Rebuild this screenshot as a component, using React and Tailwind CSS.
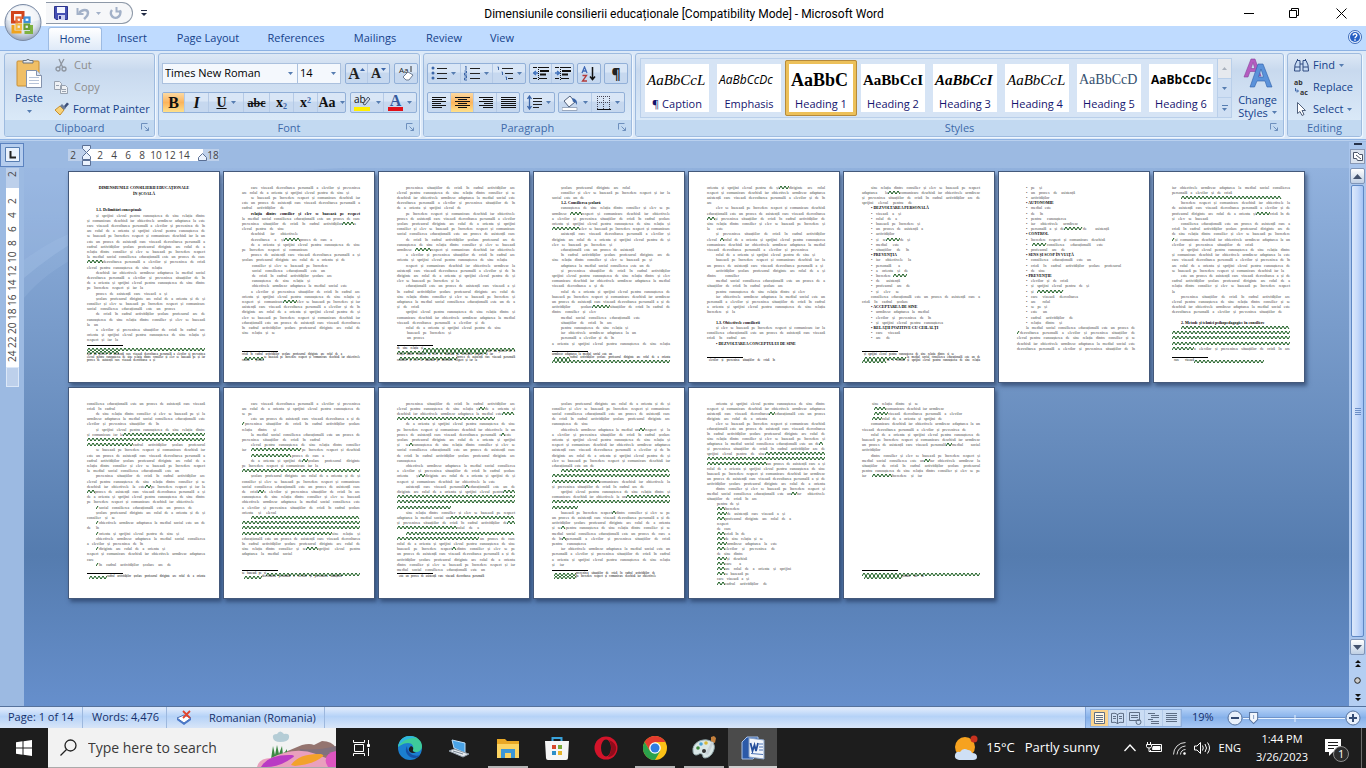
import { useState } from 'react'

// Line shorthand: F full line, P first line of a paragraph, G flagged line, _ blank,
// otherwise start-end in px, "b" for bold, "~a-b" for a flagged run.
const PAGES = [
  {
    body: '28-98b 52-68b _ _ 9-44b P F F F F F F F F F~0-16 0-75 P F F 0-56 9-80 P F 0-88 P F 0-11 P F 0-31',
    notes: 'G 0-32~0-32 F F 0-68',
    headings: ['1.1. Delimitări conceptuale'],
  },
  {
    body: 'P 0-107 P F 0-42 Pb F F~100-112 0-42 9-56 9-90~42-58 P 0-66 P 0-103 10-86 10-83 10-90 10-68 10-105 P F F~41-55 F F F F F 0-33',
    notes: '0-100 F~2-22 0-22',
  },
  {
    body: 'P F F F 0-64 P F F F F 9-118 F F~18-34 9-118 0-110 P F F 0-62 P F F F 0-22 P F 0-88 9-104 10-54 10-27',
    notes: 'F~26-118 F~0-90 0-96 F~2-60 0-80',
  },
  {
    body: '9-78 9-118 0-32 9-40b P F~18-30 F F F~0-28 P F 0-60 9-82 P 0-100 9-98 P F F 0-52 P F F F~40-58 0-44 9-88 9-60 9-76 9-84 9-62 F',
    notes: '0-60 F~2-18 F~0-118',
    headings: ['1.2. Consilierea școlară'],
  },
  {
    body: 'F~72-82 F F 0-8 P F F~0-8 F 0-16 P F~13-17 F 0-101 9-108 P 0-116 P 0-32 P 0-76 9-98 P F F 0-28 _ 9-42b P F 0-39 9-84b',
    notes: '2-68',
    headings: ['1.3. Obiectivele consilierii', '• DEZVOLTAREA CONCEPTULUI DE SINE'],
  },
  {
    body: 'P F~26-38 F 0-50 9-57b 9-39 9-35 9-58 9-61 9-38 9-48~24-38 9-37 9-47 9-31b 9-49 9-38 9-46 9-45~31-45 9-38 9-48 9-37 P 0-46 9-47b 9-67 9-69 9-81 9-62b 9-38 9-28',
    notes: '2-92 F~2-45 F~0-25',
    headings: ['• DEZVOLTAREA PERSONALĂ', '• PREVENȚIA', '• ACCEPTAREA DE SINE', '• RELAȚII POZITIVE CU CEILALȚI'],
    bullets: true,
  },
  {
    body: '9-25 9-58 9-38 9-32b 9-34 9-26 9-49 9-61 9-92~47-66 9-31b 9-88 9-86~15-30 9-48 9-48b 9-74 9-104 9-28 9-41b 9-51 9-72 9-47~20-47 9-61 9-33 9-30 9-30 9-56 9-45 P F~0-3 F F F',
    notes: '_',
    headings: ['• AUTONOMIE', '• CONTROL', '• SENS ȘI SCOP ÎN VIAȚĂ', '• PREVENȚIE'],
    bullets: true,
  },
  {
    body: 'F 0-60 9-110~9-110 P F F~84-98 0-36 P F F F~0-3 0-81 P F F F 0-112 P F F 0-5 P F F 0-110 _ 9-88b 9-118~9-118 G G G F~0-22',
    notes: '2-92~22-92',
    headings: ['2. Metode și tehnici psihopedagogice în consiliere'],
  },
  {
    body: 'F 0-28 P F 0-72 P F~36-118 G F~0-46 P F F F 0-92 P F F~58-64 F~0-8 F 0-107 9-105~9-12 P 0-28 P~9-12 0-12 9-92~9-12 P 0-56 9-78~9-12 F 0-12 9-84~9-12',
    notes: '2-118~2-20',
  },
  {
    body: 'P 0-118 0-10 P F~0-3 0-34 9-118 0-78 9-118 F~9-60 9-82~9-50 P~60-66 0-76 G 9-118 F F F~16-22 F F F 0-34 9-118~9-118 G G F~0-90 F F F~64-76 0-50',
    notes: 'F~24-118 0-100~2-20',
  },
  {
    body: 'P F~82-88 F~105-118 0-98~0-98 P F F~104-108 F F~12-16 F F 0-22 P F F~22-28 0-98 P~68-72 F~106-118 G G 0-54~0-54 P F~53-118 F~110-118 0-82~0-60 9-118~9-118 F~0-83 F F~55-60 F F F 0-88',
    notes: '2-87',
  },
  {
    body: 'P F F F 0-36 P~87-93 F F F F F F 0-42 9-118~9-118 G F~0-48 0-92 P F~74-118 G 0-26~0-26 P~60-64 F F F~9-14 F F~10-14 0-34 P F F 0-12',
    notes: '2-103~2-24 2-104~2-24',
  },
  {
    body: 'P F F~62-68 0-60 P F F F F~112-116 F F~58-118 F~0-118 F~0-60 F F F F 9-118 F~84-90 0-50 10-32 10-38~10-18 10-78~10-20 10-84~10-18 10-26 10-24 10-38~10-18 10-56~10-18 10-70~10-20 10-68~10-18 10-36 10-40~10-20 10-34~10-18 10-84~10-18 10-42~10-18 10-42 10-60~10-18',
    notes: '_',
  },
  {
    body: '10-56 10-82~12-24 10-100~12-26 10-80~10-20 P 0-104 P F F~84-90 0-28 P F~62-68 F F 0-60~10-30',
    notes: 'G 2-62~2-40',
  },
]

const WORDS = (
  'consilierea educațională este un proces de asistență care vizează dezvoltarea personală a elevilor și prevenirea situațiilor de criză ' +
  'în cadrul activităților școlare profesorul diriginte are rolul de a orienta și sprijini elevul pentru cunoașterea de sine ' +
  'relația dintre consilier și elev se bazează pe încredere respect și comunicare deschisă iar obiectivele urmăresc adaptarea la mediul social'
).split(' ')

const SHORTHANDS = { F: '0-118', P: '9-118', G: '0-118~0-118' }

function parseLine(token) {
  if (token === '_') return null
  const [head, mark] = token.split('~')
  const bold = head.endsWith('b')
  const key = bold ? head.slice(0, -1) : head
  const full = SHORTHANDS[key] || key
  const [range, own] = full.split('~')
  const [start, end] = range.split('-').map(Number)
  const flagged = (mark || own || '').split('-').map(Number)
  return { start, end, bold, flagged: flagged.length === 2 ? flagged : null }
}

// Picks as many words as fit on a run of the given width.
function fitWords(width, seed, charWidth) {
  const room = Math.floor(width / charWidth)
  const at = (seed * 17) % WORDS.length
  let text = ''
  for (const word of [...WORDS.slice(at), ...WORDS]) {
    const left = room - text.length - (text ? 1 : 0)
    if (left < 2) break
    if (word.length <= left) text += (text ? ' ' : '') + word
  }
  return text
}

function Squiggle({ width }) {
  let d = 'M0 4'
  for (let x = 2, up = true; x <= width; x += 2, up = !up) d += `L${x} ${up ? 1 : 4}`
  return (
    <svg width={width} height="5" className="shrink-0" aria-hidden="true">
      <path d={d} fill="none" stroke="#15591b" />
    </svg>
  )
}

function Run({ width, seed, bold, note, bullet }) {
  if (width <= 0) return null
  const room = bullet ? width - 5 : width
  const text = fitWords(room, seed, (note ? 1.35 : 1.8) + (bold ? 0.2 : 0))
  return (
    <>
      {bullet && <span className="w-[5px] shrink-0">•</span>}
      <span className={`shrink-0 whitespace-nowrap [text-align-last:justify] ${bold ? 'font-bold text-black' : ''}`} style={{ width: room }}>
        {text}
      </span>
    </>
  )
}

function Line({ token, seed, note, heading, bullets, className }) {
  const line = parseLine(token)
  if (!line) return <div className={className} />
  const { start, end, bold, flagged } = line
  const bullet = bullets && start === 9 && end < 118
  return (
    <div className={`flex ${className}`} style={{ paddingLeft: start }}>
      {heading ? (
        <h2 className="font-bold whitespace-nowrap text-black">{heading}</h2>
      ) : flagged ? (
        <>
          <Run width={flagged[0] - start} seed={seed} bold={bold} note={note} bullet={bullet} />
          <Squiggle width={flagged[1] - flagged[0]} />
          <Run width={end - flagged[1]} seed={seed + 3} bold={bold} note={note} />
        </>
      ) : (
        <Run width={end - start} seed={seed} bold={bold} note={note} bullet={bullet} />
      )}
    </div>
  )
}

function Sheet({ page, index }) {
  const body = page.body.split(' ')
  const headings = [...(page.headings || [])]
  return (
    <article className="flex h-[210px] flex-col bg-white pt-[13px] pr-3 pb-5 pl-[18px] font-['Liberation_Serif',serif] text-[4px] leading-[5px] text-[#484848] outline outline-[#44597b] shadow-[2px_3px_4px_1px_rgba(30,50,85,0.6)]">
      {body.map((token, i) =>
        index === 0 && i < 2 ? (
          <h1 key={i} className="h-1.5 pr-1.5 text-center font-bold text-black">
            {i === 0 ? 'DIMENSIUNILE CONSILIERII EDUCAȚIONALE' : 'ÎN ȘCOALĂ'}
          </h1>
        ) : (
          <Line
            key={i}
            token={token}
            seed={index * 7 + i}
            bullets={page.bullets}
            heading={token.endsWith('b') ? headings.shift() : null}
            className={i % 5 === 4 ? 'h-1.5' : 'h-[5px]'}
          />
        )
      )}
      {page.notes !== '_' && (
        <footer className="mt-auto text-[3px] leading-[3px] text-black">
          <div className="mb-px h-px w-9 bg-black" />
          {page.notes.split(' ').map((token, i) => (
            <Line key={i} note token={token} seed={index + i * 5} className="h-[3px]" />
          ))}
        </footer>
      )}
    </article>
  )
}

function Arrow({ className = 'text-[#567db1]' }) {
  return (
    <svg width="5" height="3" viewBox="0 0 5 3" className={`shrink-0 ${className}`} aria-hidden="true">
      <path d="M0 0h5L2.5 3z" fill="currentColor" />
    </svg>
  )
}

function Launcher({ label }) {
  return (
    <button aria-label={label} className="absolute right-1 bottom-1">
      <svg width="9" height="9" viewBox="0 0 9 9" fill="none" stroke="#6d8fbd">
        <path d="M.5 6.500V.5h6M3.500 3.500l4 4M7.500 4.500v3h-3" />
      </svg>
    </button>
  )
}

function Group({ title, className, launcher = true, children }) {
  return (
    <section className={`relative flex flex-col rounded-[3px] border border-[#9ebbdf] bg-linear-to-b from-[#dde8f5] from-0% via-[#c8d9ee] via-20% to-[#dae9f8] to-80% shadow-[1px_1px_0_#f0f7ff] ${className}`}>
      <div className="flex flex-1">{children}</div>
      <h2 className="h-4 rounded-b-[2px] bg-[#c2d9f1] text-center leading-4 text-[#3e6aaa]">{title}</h2>
      {launcher && <Launcher label={`${title} options`} />}
    </section>
  )
}

function Cluster({ className = '', children }) {
  return (
    <div className={`flex h-[21px] divide-x divide-[#b5cae6] rounded-[2px] border border-[#92b0d8] bg-linear-to-b from-[#d9e6f6] from-40% to-[#c6d8ef] to-50% ${className}`}>
      {children}
    </div>
  )
}

function Tool({ label, active, drop, className = 'flex-1', children }) {
  return (
    <button
      aria-label={label}
      aria-pressed={active}
      className={`flex items-center justify-center gap-1 ${active ? 'bg-linear-to-b from-[#fcd9a0] via-[#fbb45c] to-[#fde08a]' : ''} ${className}`}
    >
      {children}
      {drop && <Arrow />}
    </button>
  )
}

function Bars({ rows }) {
  return (
    <svg width="15" height="12" viewBox="0 0 15 12" shapeRendering="crispEdges">
      {rows.map(([x, w], i) => (
        <rect key={i} x={x} y={i * 2} width={w} height="1" fill="#111" />
      ))}
    </svg>
  )
}

function ListIcon({ kind }) {
  const x = kind === 'multi' ? [5, 8, 11] : [6, 6, 6]
  return (
    <svg width="16" height="15" viewBox="0 0 16 15">
      {[2, 7, 12].map((y, i) => (
        <g key={y}>
          {kind === 'bullet' ? (
            <circle cx="2" cy={y} r="1.500" fill="#3c66a8" />
          ) : kind === 'number' ? (
            <path d={i ? `M.5 ${y - 2}h2v2h-2v2h2.500` : `M1 ${y - 2}h1v4`} fill="none" stroke="#3c66a8" />
          ) : (
            <path d={`M${i * 4 + 0.5} ${y - 1}h1v3`} fill="none" stroke="#3c66a8" />
          )}
          <path d={`M${x[i]} ${y + 0.5}H16`} stroke="#222" />
        </g>
      ))}
    </svg>
  )
}

function IndentIcon({ flip }) {
  return (
    <svg width="16" height="13" viewBox="0 0 16 13" fill="none" stroke="#111">
      <path d="M0 .5h4M6 .5h10M0 11.500h4M6 11.500h8" />
      <path d="M7 4h9M7 7.500h6" strokeWidth="2" />
      <path d="M5.500 0v13" strokeDasharray="1 1" />
      <path d={flip ? 'M0 6h4M2 4l2.500 2L2 8' : 'M5 6H1M3 4L.5 6 3 8'} stroke="#4273bd" strokeWidth="1.500" />
    </svg>
  )
}

function OfficeButton() {
  return (
    <button aria-label="Office Button" className="absolute top-0.5 left-1 z-10">
      <svg width="38" height="40" viewBox="0 0 38 40">
        <defs>
          <radialGradient id="orb" cx=".5" cy=".35" r=".65">
            <stop offset="0" stopColor="#fff" />
            <stop offset=".65" stopColor="#dfe5ee" />
            <stop offset="1" stopColor="#94a3bb" />
          </radialGradient>
        </defs>
        <circle cx="19" cy="20.500" r="18" fill="url(#orb)" stroke="#7b8ba5" />
        <path d="M3 18a16 14 0 0 1 32 0q-16 6-32 0z" fill="#fff" opacity=".5" />
        <g fill="none" strokeWidth="3">
          <path d="M19 17v-6.500H8.500v9.500H14" stroke="#d1441c" />
          <path d="M9 23v7h8.500" stroke="#f0a31c" />
          <path d="M20.500 30.500h7V23" stroke="#7fb241" />
          <g strokeWidth="2.200">
            <rect x="12.500" y="15.500" width="4.500" height="4.500" stroke="#e8703a" />
            <rect x="20.500" y="15.500" width="5" height="4.500" stroke="#3f8fd6" />
            <rect x="12.500" y="22.500" width="4.500" height="4.500" stroke="#f5b93f" />
            <rect x="20.500" y="22.500" width="4.500" height="4.500" stroke="#69a034" />
          </g>
        </g>
      </svg>
    </button>
  )
}

function TitleBar() {
  return (
    <header className="relative flex h-[26px] items-center bg-white">
      <OfficeButton />
      <div className="ml-[46px] flex h-[22px] w-[87px] items-center gap-2 rounded-r-full border border-l-0 border-[#8e99a8] bg-[#f6f7f9] pl-2">
        <button aria-label="Save">
          <svg width="14" height="14" viewBox="0 0 14 14">
            <path d="M.5.5h13v13H2L.5 12z" fill="#4650b4" stroke="#2d348c" />
            <path d="M3 1h8v6H3z" fill="#f3f5ff" />
            <path d="M4 9h7v5H4z" fill="#c9cdf0" />
            <path d="M5 10h2v3H5z" fill="#2d348c" />
          </svg>
        </button>
        <button aria-label="Undo" className="flex items-center gap-1.5">
          <svg width="14" height="13" viewBox="0 0 14 13" fill="none" stroke="#a3b1c8" strokeWidth="2.500">
            <path d="M3 6c3-4 9-4 9 0 0 3-2 4-4 6" />
            <path d="M1.500 1v6h6" strokeWidth="2" />
          </svg>
          <Arrow className="text-[#a3b1c8]" />
        </button>
        <button aria-label="Redo">
          <svg width="13" height="13" viewBox="0 0 13 13" fill="none" stroke="#a3b1c8" strokeWidth="2.500">
            <path d="M3 3a4.700 4.700 0 1 0 7.500.5" />
            <path d="M7.500 0v4.500h5" strokeWidth="2" />
          </svg>
        </button>
      </div>
      <button aria-label="Customize Quick Access Toolbar" className="ml-2">
        <svg width="6" height="6" viewBox="0 0 6 6">
          <path d="M0 .5h6" stroke="#222b44" />
          <path d="M0 3h6L3 6z" fill="#222b44" />
        </svg>
      </button>
      <h1 className="absolute inset-x-0 pt-0.5 pl-0.5 text-center font-['Roboto','Noto_Sans',sans-serif] text-xs text-black">
        Dimensiunile consilierii educaționale [Compatibility Mode] - Microsoft Word
      </h1>
      <div className="z-10 ml-auto flex">
        <button aria-label="Minimize" className="flex w-[45px] justify-center">
          <svg width="11" height="11" stroke="#000"><path d="M0 5.500h10" /></svg>
        </button>
        <button aria-label="Restore" className="flex w-[45px] justify-center">
          <svg width="11" height="11" fill="none" stroke="#000"><path d="M.5 2.500h7v7h-7zM2.500 2.500v-2h7v7h-2" /></svg>
        </button>
        <button aria-label="Close" className="flex w-[49px] justify-center">
          <svg width="11" height="11" stroke="#000"><path d="M.5.5l10 10M10.500.5l-10 10" /></svg>
        </button>
      </div>
    </header>
  )
}

const TABS = [
  ['Home', 'w-[54px]'],
  ['Insert', 'w-[54px]'],
  ['Page Layout', 'w-24'],
  ['References', 'w-[78px]'],
  ['Mailings', 'w-[78px]'],
  ['Review', 'w-[58px]'],
  ['View', 'w-14'],
]

function Tabs({ tab, onTab }) {
  return (
    <nav className="flex h-6 items-end bg-[#bfdbff] pl-12">
      {TABS.map(([name, width]) => (
        <button
          key={name}
          onClick={() => onTab(name)}
          className={`h-[23px] shrink-0 text-center text-[#15428b] ${width} ${
            tab === name ? 'mr-[3px] rounded-t-[3px] border border-b-0 border-[#9dbbe3] bg-linear-to-b from-white to-[#dfeaf8]' : 'mr-px'
          }`}
        >
          {name}
        </button>
      ))}
      <button aria-label="Help" className="mr-1 mb-1.5 ml-auto">
        <svg width="14" height="14" viewBox="0 0 14 14">
          <circle cx="7" cy="7" r="6.500" fill="#eaf3ff" stroke="#3d6ab8" />
          <circle cx="7" cy="7" r="5" fill="#2660c4" />
          <path d="M5.200 5.500c0-2.500 3.800-2.300 3.600 0-.1 1.200-1.800 1.300-1.800 2.700M7 9.300v1.400" fill="none" stroke="#fff" strokeWidth="1.400" />
        </svg>
      </button>
    </nav>
  )
}

function Clipboard() {
  return (
    <Group title="Clipboard" className="w-[151px] shrink-0">
      <button className="ml-[7px] flex w-[34px] flex-col items-center pt-1 text-[#15428b]">
        <svg width="27" height="30" viewBox="0 0 27 30" className="shrink-0">
          <path d="M1 4q0-1 1-1h20q1 0 1 1v23q0 1-1 1H2q-1 0-1-1z" fill="#f0bf66" stroke="#c98f34" />
          <path d="M7 5V2.500h3Q12 0 14 2.500h3V5z" fill="#e6e9ee" stroke="#68737f" />
          <path d="M10.500 12.500h10l5 5v12h-15z" fill="#fff" stroke="#8493ad" />
          <path d="M20.500 12.500v5h5" fill="#dde7f4" stroke="#8493ad" />
          <path d="M13 19.500h10M13 22.500h10M13 25.500h10" stroke="#b7c4d9" />
        </svg>
        <span className="mt-0.5 leading-4">Paste</span>
        <Arrow className="mt-1 text-[#567db1]" />
      </button>
      <div className="ml-2 flex flex-col text-[#8d8d8d]">
        <button disabled className="flex h-[22px] items-center gap-1.5">
          <svg width="14" height="14" viewBox="0 0 14 14" fill="none" stroke="#8e959f" strokeWidth="1.300">
            <path d="M5 1l4 9M10 1L5 10" />
            <circle cx="4" cy="11" r="2" />
            <circle cx="10" cy="11" r="2" />
          </svg>
          Cut
        </button>
        <button disabled className="flex h-[22px] items-center gap-1.5">
          <svg width="14" height="13" viewBox="0 0 14 13" fill="#eef1f5" stroke="#98a2b0">
            <path d="M.5.5h5l2 2v6h-7zM6.500 4.500h5l2 2v6h-7z" />
            <path d="M8 8.500h4M8 10.500h4M2 4.500h3" />
          </svg>
          Copy
        </button>
        <button className="flex h-[22px] items-center gap-1 whitespace-nowrap text-[#15428b]">
          <svg width="15" height="14" viewBox="0 0 15 14" className="shrink-0">
            <path d="M1 8l5-4 4 4-4 5z" fill="#f7d27a" stroke="#c78f2c" />
            <path d="M6 4l2-2 4 4-2 2z" fill="#6b7c9b" />
            <path d="M10 4l3-3.500L15 2l-3.500 4z" fill="#3c4f7a" />
          </svg>
          Format Painter
        </button>
      </div>
    </Group>
  )
}

function Combo({ label, value, options, className }) {
  return (
    <div className={`relative flex h-[21px] border border-[#abc1de] bg-[#f4f8fd] ${className}`}>
      <select aria-label={label} defaultValue={value} className="w-full appearance-none pl-0.5 text-black">
        {options.map((o) => (
          <option key={o}>{o}</option>
        ))}
      </select>
      <Arrow className="pointer-events-none absolute top-2 right-1 text-[#567db1]" />
    </div>
  )
}

function FontGroup() {
  const serif = "font-['Liberation_Serif',serif]"
  return (
    <Group title="Font" className="w-[262px] shrink-0">
      <div className="flex flex-1 flex-col gap-2 px-[3px] pt-[9px]">
        <div className="flex">
          <Combo label="Font" value="Times New Roman" options={['Times New Roman', 'Arial', 'Calibri']} className="w-[136px]" />
          <Combo label="Font Size" value="14" options={['12', '14', '16']} className="w-[43px] border-l-0" />
          <Cluster className="ml-1 w-[45px]">
            <Tool label="Grow Font">
              <span className={`text-base leading-4 font-bold text-[#222] ${serif}`}>A</span>
              <svg width="5" height="3" className="-mt-2 -ml-1"><path d="M0 3h5L2.500 0z" fill="#3c66a8" /></svg>
            </Tool>
            <Tool label="Shrink Font">
              <span className={`text-sm leading-4 font-bold text-[#222] ${serif}`}>A</span>
              <Arrow className="-mt-2 -ml-1 text-[#3c66a8]" />
            </Tool>
          </Cluster>
          <Cluster className="ml-1 w-6">
            <Tool label="Clear Formatting">
              <svg width="18" height="17" viewBox="0 0 18 17" className="overflow-visible">
                <text x="2" y="8" fontSize="8" fill="#222">Aa</text>
                <path d="M6 12l5-5 5 3-4 5H9z" fill="#fff" stroke="#6f7e95" />
                <path d="M14 1v6" stroke="#333" />
              </svg>
            </Tool>
          </Cluster>
        </div>
        <div className="flex">
          <Cluster className={`w-[184px] text-[#111] ${serif}`}>
            <Tool label="Bold" active className="w-[22px]"><b className="text-base leading-4">B</b></Tool>
            <Tool label="Italic" className="w-6"><i className="text-base leading-4 font-bold">I</i></Tool>
            <Tool label="Underline" drop className="w-[35px]"><u className="text-sm leading-4 font-bold">U</u></Tool>
            <Tool label="Strikethrough" className="w-[26px]"><s className="text-xs leading-4 font-bold">abc</s></Tool>
            <Tool label="Subscript" className="w-6">
              <span className="text-sm leading-4 font-bold">x<sub className="text-[8px] text-[#3c66a8]">2</sub></span>
            </Tool>
            <Tool label="Superscript" className="w-6">
              <span className="text-sm leading-4 font-bold">x<sup className="text-[8px] text-[#3c66a8]">2</sup></span>
            </Tool>
            <Tool label="Change Case" drop><span className="text-sm leading-4 font-bold">Aa</span></Tool>
          </Cluster>
          <Cluster className="ml-1 w-[67px]">
            <Tool label="Text Highlight Color" drop>
              <svg width="18" height="17" viewBox="0 0 18 17" className="overflow-visible">
                <text x="0" y="9" fontSize="10" fill="#111">ab</text>
                <path d="M9 10l5-7 2 2-5 6z" fill="#cfd8e6" stroke="#4d5b73" />
                <path d="M0 13h16v4H0z" fill="#ffee00" />
              </svg>
            </Tool>
            <Tool label="Font Color" drop>
              <span className={`border-b-4 border-[#e01018] px-0.5 text-base leading-3 font-bold text-[#35599c] ${serif}`}>A</span>
            </Tool>
          </Cluster>
        </div>
      </div>
    </Group>
  )
}

function ParagraphGroup() {
  return (
    <Group title="Paragraph" className="w-[209px] shrink-0">
      <div className="flex flex-1 flex-col gap-2 px-[3px] pt-[9px]">
        <div className="flex gap-[3px]">
          <Cluster className="w-[99px]">
            <Tool label="Bullets" drop><ListIcon kind="bullet" /></Tool>
            <Tool label="Numbering" drop><ListIcon kind="number" /></Tool>
            <Tool label="Multilevel List" drop><ListIcon kind="multi" /></Tool>
          </Cluster>
          <Cluster className="w-[45px]">
            <Tool label="Decrease Indent"><IndentIcon /></Tool>
            <Tool label="Increase Indent"><IndentIcon flip /></Tool>
          </Cluster>
          <Cluster className="w-6">
            <Tool label="Sort">
              <svg width="16" height="16" viewBox="0 0 16 16" fill="none">
                <path d="M1 7l2.500-6L6 7M2 5h3" stroke="#3f69b5" strokeWidth="1.300" />
                <path d="M1.500 9.500h4l-4 5.500h4.500" stroke="#b33a3a" strokeWidth="1.300" />
                <path d="M11.500 1v12M9 10.500l2.500 3 2.500-3" stroke="#111" strokeWidth="1.500" />
              </svg>
            </Tool>
          </Cluster>
          <Cluster className="w-6">
            <Tool label="Show Paragraph Marks"><span className="text-sm leading-4 font-bold text-[#222]">¶</span></Tool>
          </Cluster>
        </div>
        <div className="flex gap-[3px]">
          <Cluster className="w-[93px]">
            <Tool label="Align Left"><Bars rows={[[0, 14], [0, 10], [0, 14], [0, 9], [0, 14], [0, 10]]} /></Tool>
            <Tool label="Center" active><Bars rows={[[0, 15], [3, 9], [0, 15], [3, 9], [0, 15], [3, 9]]} /></Tool>
            <Tool label="Align Right"><Bars rows={[[1, 14], [5, 10], [1, 14], [6, 9], [1, 14], [5, 10]]} /></Tool>
            <Tool label="Justify"><Bars rows={[[0, 15], [0, 15], [0, 15], [0, 15], [0, 15], [0, 15]]} /></Tool>
          </Cluster>
          <Cluster className="w-8">
            <Tool label="Line Spacing" drop>
              <svg width="15" height="15" viewBox="0 0 15 15" fill="none">
                <path d="M2.500 1v13M.5 4l2-3 2 3M.5 11l2 3 2-3" stroke="#3c66a8" strokeWidth="1.300" />
                <path d="M6 3.500h9M6 6.500h9M6 9.500h9M6 12.500h6" stroke="#222" />
              </svg>
            </Tool>
          </Cluster>
          <Cluster className="w-[67px]">
            <Tool label="Shading" drop>
              <svg width="17" height="16" viewBox="0 0 17 16">
                <path d="M2 6l6-5 5 6-6 5z" fill="#f5f8fc" stroke="#51617c" />
                <path d="M10 3q6 1 5 7-2-4-4-3z" fill="#3c66a8" />
                <path d="M0 12.500h15v3H0z" fill="#fff" stroke="#9aa8bd" />
              </svg>
            </Tool>
            <Tool label="Borders" drop>
              <svg width="14" height="14" viewBox="0 0 14 14" fill="none" stroke="#445" strokeDasharray="1 1">
                <path d="M.5 0v13M6.500 0v13M12.500 0v13M0 .5h13M0 6.500h13" />
                <path d="M0 13.500h14" strokeDasharray="none" stroke="#111" />
              </svg>
            </Tool>
          </Cluster>
        </div>
      </div>
    </Group>
  )
}

const STYLES = [
  ['¶ Caption', "font-['Liberation_Serif',serif] text-[15px] italic", 'AaBbCcL'],
  ['Emphasis', 'text-xs italic', 'AaBbCcDc'],
  ['Heading 1', "font-['Liberation_Serif',serif] text-lg font-bold", 'AaBbC'],
  ['Heading 2', "font-['Liberation_Serif',serif] text-[15px] font-bold", 'AaBbCcI'],
  ['Heading 3', "font-['Liberation_Serif',serif] text-[15px] font-bold italic", 'AaBbCcI'],
  ['Heading 4', "font-['Liberation_Serif',serif] text-[15px] italic", 'AaBbCcL'],
  ['Heading 5', "font-['Liberation_Serif',serif] text-sm text-[#35506f]", 'AaBbCcD'],
  ['Heading 6', 'text-xs font-bold', 'AaBbCcDc'],
]

function StylesGroup() {
  const [selected, setSelected] = useState('Heading 1')
  return (
    <Group title="Styles" className="min-w-0 flex-1">
      <div className="mt-1 ml-1 flex h-[60px] min-w-0 flex-1 overflow-hidden border border-[#b9cfea] bg-[#d6e4f5]">
        {STYLES.map(([name, font, sample]) => (
          <button
            key={name}
            onClick={() => setSelected(name)}
            className={`my-px flex w-[72px] shrink-0 flex-col border-4 bg-white bg-clip-padding text-black ${
              selected === name ? 'rounded-[2px] border-[#ecc05a] outline -outline-offset-1 outline-[#b58a3c]' : 'border-transparent'
            }`}
          >
            <span className={`ml-0.5 h-8 text-left leading-8 whitespace-nowrap ${font}`}>{sample}</span>
            <span className="w-full text-center leading-4 whitespace-nowrap text-[#14146e]">{name}</span>
          </button>
        ))}
        <div className="ml-auto flex w-3.5 shrink-0 flex-col divide-y divide-[#b9cfea] border-l border-[#b9cfea] bg-[#cfdff3]">
          <button aria-label="Row up" className="flex flex-1 items-center justify-center bg-[#e6e9ee]">
            <svg width="5" height="3"><path d="M0 3h5L2.500 0z" fill="#a9b1bd" /></svg>
          </button>
          <button aria-label="Row down" className="flex flex-1 items-center justify-center"><Arrow /></button>
          <button aria-label="More styles" className="flex flex-1 flex-col items-center justify-center gap-0.5">
            <span className="h-px w-1.5 bg-[#567db1]" />
            <Arrow />
          </button>
        </div>
      </div>
      <button className="w-[51px] shrink-0 pt-0.5 leading-[13px] text-[#15428b]">
        <svg width="30" height="31" viewBox="0 0 30 31" className="mx-auto mb-1">
          <path d="M1 19L8 1h4l6 17h-4l-1.500-4.500H7L5 19zM8 10.500h3.800L10 4.500z" fill="#b55cc0" stroke="#86449a" strokeWidth=".6" />
          <path d="M7 29l8-23h5l9 23h-5l-2-6h-8l-2.500 6zM15.500 19h5L18 11z" fill="#5b92da" stroke="#2f5fa8" strokeWidth=".6" />
        </svg>
        Change
        <span className="flex items-center justify-center gap-1">Styles <Arrow /></span>
      </button>
    </Group>
  )
}

function EditingGroup() {
  return (
    <Group title="Editing" launcher={false} className="w-[75px] shrink-0">
      <div className="flex flex-col pl-1.5 text-[#15428b]">
        <button className="flex h-[22px] items-center gap-1">
          <svg width="15" height="13" viewBox="0 0 15 13" fill="#c9dcf4" stroke="#2f4a80">
            <path d="M1 6l2-4.500h3V12H.5zM14 6l-2-4.500H9V12h5.500z" />
            <path d="M6 5h3M1 8h5M9 8h5M3.500 1.500V0M11.500 1.500V0" />
          </svg>
          Find <Arrow />
        </button>
        <button className="flex h-[22px] items-center gap-1">
          <svg width="15" height="15" viewBox="0 0 15 15" className="overflow-visible">
            <text x="0" y="5" fontSize="7" fontWeight="bold" fill="#333">ab</text>
            <text x="6" y="15" fontSize="7" fontWeight="bold" fill="#333">ac</text>
            <path d="M1.500 8v3H4M3 9.500L4.500 11 3 12.500" fill="none" stroke="#3c66a8" />
          </svg>
          Replace
        </button>
        <button className="flex h-[22px] items-center gap-1">
          <svg width="15" height="14" viewBox="0 0 15 14">
            <path d="M3.500.5v11l2.500-2 2 4 2-1-2-4h3.500z" fill="#fff" stroke="#51617c" />
          </svg>
          Select <Arrow />
        </button>
      </div>
    </Group>
  )
}

function Rulers() {
  return (
    <div className="flex h-7 items-center border-t border-[#b9d0ee] bg-[#9cbae2]">
      <button aria-label="Tab selector" className="flex size-6 items-center justify-center border border-[#5c83c0] bg-[#b5cdee]">
        <svg width="15" height="15" viewBox="0 0 15 15">
          <path d="M.5.5h14v14H.5z" fill="#eaf2fd" stroke="#567db1" />
          <path d="M5.500 4v6.500H11" fill="none" stroke="#222" strokeWidth="2" />
        </svg>
      </button>
      <div className="relative ml-11 flex h-3 text-center text-[10px] leading-3 text-[#444]">
        <span className="w-[18px] bg-[#bdd0eb] pr-2">2</span>
        <div className="flex bg-white pr-3 pl-[7px]">
          {[2, 4, 6, 8, 10, 12, 14].map((n) => (
            <span key={n} className="w-3.5">{n}</span>
          ))}
        </div>
        <span className="w-4 bg-[#bdd0eb] pl-1">18</span>
        <svg width="9" height="21" viewBox="0 0 9 21" className="absolute -top-1 left-3.5" fill="#eaf2fd" stroke="#5a6f94">
          <path d="M.5.5h8v3l-4 4-4-4zM.5 14.500v-3l4-4 4 4v3zM.5 15.500h8v5h-8z" />
        </svg>
        <svg width="9" height="8" viewBox="0 0 9 8" className="absolute top-1 right-3" fill="#eaf2fd" stroke="#5a6f94">
          <path d="M.5 7.500v-3l4-4 4 4v3z" />
        </svg>
      </div>
    </div>
  )
}

function VerticalRuler() {
  return (
    <aside className="w-6 shrink-0 bg-[#9cbae2] pl-1.5">
      <div className="flex w-[13px] flex-col text-[10px] text-[#444]">
        <span className="h-5 rotate-180 bg-[#bdd0eb] pt-2 text-center leading-[13px] [writing-mode:vertical-rl]">2</span>
        <div className="flex h-[179px] flex-col bg-white pt-1.5 pb-1">
          {[2, 4, 6, 8, 10, 12, 14, 16, 18, 20, 22, 24].map((n) => (
            <span key={n} className="flex-1 rotate-180 text-center leading-[13px] [writing-mode:vertical-rl]">{n}</span>
          ))}
        </div>
        <span className="h-5 border border-[#dce8f8] bg-[#bdd0eb]" />
      </div>
    </aside>
  )
}

function ScrollBar() {
  return (
    <aside className="-mt-[26px] flex w-[17px] shrink-0 flex-col items-center bg-[#a9c5ec]">
      <span className="mt-px h-0.5 w-2 bg-[#26324a]" />
      <button aria-label="View Ruler" className="mt-1 flex h-[15px] w-[15px] items-center justify-center border border-[#8898b5] bg-[#dbe3ee]">
        <svg width="12" height="11" viewBox="0 0 12 11" fill="#fff" stroke="#4b5568">
          <path d="M1.500 1.500h4l2 2h3v6h-5l-1-2h-3zM4 4l5 4" />
        </svg>
      </button>
      <button aria-label="Scroll up" className="mt-1 flex h-4 w-[15px] items-center justify-center rounded-[2px] border border-[#7f95b8] bg-linear-to-b from-white to-[#bfcfe4]">
        <svg width="9" height="5"><path d="M0 5h9L4.500 0z" fill="#44536e" /></svg>
      </button>
      <div className="mt-px flex w-[13px] flex-1 flex-col items-center justify-center gap-px rounded-[2px] border border-[#5f88c4] bg-linear-to-r from-[#dce9fb] via-[#c6dafa] to-[#a3c2f5]">
        <span className="h-px w-1.5 bg-[#6c8fc6]" />
        <span className="h-px w-1.5 bg-[#6c8fc6]" />
        <span className="h-px w-1.5 bg-[#6c8fc6]" />
        <span className="h-px w-1.5 bg-[#6c8fc6]" />
      </div>
      <button aria-label="Scroll down" className="mt-0.5 flex h-4 w-[15px] items-center justify-center rounded-[2px] border border-[#7f95b8] bg-linear-to-b from-white to-[#bfcfe4]">
        <svg width="9" height="5"><path d="M0 0h9L4.500 5z" fill="#44536e" /></svg>
      </button>
      <div className="flex h-[51px] w-full flex-col items-center justify-around bg-[#b4cef2]">
        <button aria-label="Previous Page"><svg width="6" height="7"><path d="M0 3h6L3 0zM0 7h6L3 4z" fill="#111" /></svg></button>
        <button aria-label="Select Browse Object"><svg width="7" height="7"><circle cx="3.500" cy="3.500" r="2.800" fill="#ccc" stroke="#222" /></svg></button>
        <button aria-label="Next Page"><svg width="6" height="7"><path d="M0 0h6L3 3zM0 4h6L3 7z" fill="#111" /></svg></button>
      </div>
    </aside>
  )
}

function Workspace() {
  return (
    <div className="flex flex-1">
      <VerticalRuler />
      <main className="relative flex-1 overflow-hidden bg-linear-to-b from-[#92b2de] from-0% via-[#557caf] via-72% to-[#668fcc]">
        <svg className="absolute inset-0 h-[260px] w-full" viewBox="0 0 1325 260" preserveAspectRatio="none" aria-hidden="true">
          <path d="M0 0h320Q120 8 0 110z" fill="#b5cdf0" opacity=".25" />
          <path d="M0 92Q30 70 60 60V85Q20 105 0 130z" fill="#b5cdf0" opacity=".15" />
        </svg>
        <div className="relative grid grid-cols-[repeat(auto-fill,150px)] justify-center gap-x-[5px] gap-y-1.5 pt-1">
          {PAGES.map((page, i) => (
            <Sheet key={i} page={page} index={i} />
          ))}
        </div>
      </main>
      <ScrollBar />
    </div>
  )
}

const VIEWS = [
  ['Print Layout', 'M2.500 1.500h10v11h-10zM4 4.500h7M4 6.500h7M4 8.500h7M4 10.500h7'],
  ['Full Screen Reading', 'M7.500 3v10M1.500 2.500q4-1 6 1 2-2 6-1v9q-4-1-6 1-2-2-6-1zM3 5.500h3M3 7.500h3M9 5.500h3M9 7.500h3'],
  ['Web Layout', 'M1.500 1.500h10v8h-10zM3 4.500h7M3 6.500h7M8 11a2 2 0 1 0 5 0 2 2 0 1 0-5 0'],
  ['Outline', 'M2 2.500h7M5 4.500h8M5 6.500h8M2 8.500h5M5 10.500h8M5 12.500h8'],
  ['Draft', 'M2 2.500h11M2 4.500h11M2 6.500h11M2 8.500h11M2 10.500h11'],
]

function StatusBar() {
  const [view, setView] = useState('Print Layout')
  return (
    <footer className="flex h-[22px] shrink-0 items-stretch border-t border-[#56729c] bg-linear-to-b from-[#dbe8fb] from-10% via-[#b5d2f7] via-45% to-[#d8e5f8] text-[#15306b]">
      <div className="flex divide-x divide-[#9db8de] border-r border-[#9db8de] leading-5 whitespace-nowrap">
        <span className="w-[83px] pl-2">Page: 1 of 14</span>
        <span className="w-[84px] pl-[9px]">Words: 4,476</span>
        <div className="flex w-[157px] items-center pl-[9px]">
          <svg width="17" height="15" viewBox="0 0 17 15">
            <path d="M1 8l7-3 7 3-7 5z" fill="#fff" stroke="#4a6fb4" />
            <path d="M1 8v2l7 5 7-5V8l-7 5z" fill="#4a78c8" />
            <path d="M7 1l7 7M14 1L7 8" stroke="#e0452f" strokeWidth="1.800" />
          </svg>
          <span className="ml-4">Romanian (Romania)</span>
        </div>
      </div>
      <div className="ml-auto flex w-[281px] items-center border-l border-[#7fa3d8] bg-linear-to-b from-[#b9d4f8] via-[#86b1ea] to-[#a9c8f3] pl-1">
        <div className="flex h-[18px] w-[92px] border border-[#8daedc] bg-[#cbddf4]">
          {VIEWS.map(([name, d]) => (
            <button
              key={name}
              aria-label={name}
              onClick={() => setView(name)}
              className={`flex flex-1 items-center justify-center border-r border-[#b4cae8] ${view === name ? 'bg-[#fbd58f]' : ''}`}
            >
              <svg width="15" height="14" viewBox="0 0 15 14" fill={name === 'Print Layout' ? '#fff8e6' : 'none'} stroke="#5f6f86"><path d={d} /></svg>
            </button>
          ))}
        </div>
        <span className="ml-2.5 w-[35px]">19%</span>
        <button aria-label="Zoom out">
          <svg width="16" height="16"><circle cx="8" cy="8" r="7" fill="#e8f0fb" stroke="#56739f" /><path d="M4 8h8" stroke="#334a72" strokeWidth="2" /></svg>
        </button>
        <div className="relative flex h-4 flex-1 items-center">
          <input aria-label="Zoom" type="range" min="10" max="500" defaultValue="19" className="absolute inset-0 w-full opacity-0" />
          <svg viewBox="0 0 101 16" preserveAspectRatio="none" className="pointer-events-none h-4 w-full">
            <path d="M0 8.500h101" stroke="#e8f2ff" />
            <path d="M0 7.500h101" stroke="#6f93c9" />
            <path d="M51.500 5v7" stroke="#e8f2ff" />
            <path d="M6.500 2.500h8v7l-4 4-4-4z" fill="#f2f6fc" stroke="#56739f" />
            <path d="M10.500 5v4" stroke="#8ba2c6" />
          </svg>
        </div>
        <button aria-label="Zoom in" className="mr-[5px]">
          <svg width="16" height="16"><circle cx="8" cy="8" r="7" fill="#e8f0fb" stroke="#56739f" /><path d="M4 8h8M8 4v8" stroke="#334a72" strokeWidth="2" /></svg>
        </button>
      </div>
    </footer>
  )
}

const APPS = [
  ['Task View', '', (
    <g fill="none" stroke="#fff">
      <path d="M4.500 4v2.500h11V4M4.500 20v-2.500h11V20M5.500 8.500h9v7h-9zM19.500 4v5M19.500 12v8" />
      <path d="M18.500 8.500h2v2h-2z" fill="#fff" />
    </g>
  )],
  ['Microsoft Edge', '', (
    <g>
      <circle cx="12" cy="12" r="12" fill="#1b7fd0" />
      <path d="M0 11C1 3 7 0 12 0c7 0 12 5 12 10 0 4-3 6-6 6-3 0-4-1-3-3 1-3-1-6-5-6-5 0-8 3-10 4z" fill="#3ecb9a" />
      <path d="M0 11C1 3 7 0 12 0c3 0 5 1 7 2C12 1 3 5 0 11z" fill="#2fb5e0" />
      <path d="M9 10c-3 5 0 11 7 12 3 0 5-1 6-3-2 1-6 1-9-1-3-2-4-5-4-8z" fill="#1550a6" />
      <path d="M13 10q3 1 2 4-1 2 3 2-3 2-6 0-3-3 1-6z" fill="#1d1d1d" />
    </g>
  )],
  ['Remote Desktop', '', (
    <g>
      <path d="M5 4l13 3v10L7 12z" fill="#4aa3e6" stroke="#bfe0fa" />
      <path d="M2 15l5-2 15 5-6 3z" fill="#e6ebf0" stroke="#8e9aa6" />
      <path d="M6 15l10 3" stroke="#7c8894" />
    </g>
  )],
  ['File Explorer', 'w-10 bg-[#b5b5b5]', (
    <g>
      <path d="M1 3h8l2 2h12v17H1z" fill="#e9a825" />
      <path d="M1 8h22v14H1z" fill="#fcd462" />
      <path d="M5 13h14v9h-4v-5H9v5H5z" fill="#3d97d6" />
    </g>
  )],
  ['Microsoft Store', '', (
    <g>
      <path d="M7.500 5V2h9v3" fill="none" stroke="#39a3dc" strokeWidth="2" />
      <path d="M0 5h24l-1 17q0 2-2 2H3q-2 0-2-2z" fill="#f6f6f6" />
      <path d="M7 9h4v4H7z" fill="#d8492b" />
      <path d="M13 9h4v4h-4z" fill="#79a93b" />
      <path d="M7 15h4v4H7z" fill="#2c8fc9" />
      <path d="M13 15h4v4h-4z" fill="#e8b52c" />
    </g>
  )],
  ['Opera', '', (
    <g>
      <ellipse cx="12" cy="12" rx="11.500" ry="11.500" fill="#d3142a" />
      <ellipse cx="12" cy="12" rx="5" ry="8.500" fill="#1d1d1d" />
      <path d="M15 4q8 3 7 10-2 7-8 7 6-8 1-17z" fill="#8f0c1b" />
    </g>
  )],
  ['Google Chrome', 'w-10 bg-[#b5b5b5]', (
    <g>
      <circle cx="12" cy="12" r="12" fill="#fbc116" />
      <path d="M1.600 6A12 12 0 0 1 22.400 6H12L7 15z" fill="#e33b2e" />
      <path d="M1.600 6A12 12 0 0 0 12 24l5.200-9H7z" fill="#2ba24c" />
      <circle cx="12" cy="12" r="5.800" fill="#fff" />
      <circle cx="12" cy="12" r="4.500" fill="#2f7de1" />
    </g>
  )],
  ['Paint', 'w-10 bg-[#b5b5b5]', (
    <g>
      <path d="M1 15C0 8 8 3 15 4c7 1 9 6 6 12-3 6-9 7-10 5 0-3-2-4-4-3-3 2-6 1-6-3z" fill="#d9e6e6" stroke="#93a9ac" />
      <circle cx="6" cy="12" r="1.800" fill="#3f8a3b" />
      <circle cx="9" cy="8" r="1.800" fill="#47a3d9" />
      <circle cx="14" cy="7" r="1.800" fill="#d9b836" />
      <circle cx="12" cy="15" r="2" fill="#333" />
      <path d="M13 18L20 5l2 1-6 13z" fill="#c9d3d8" />
      <path d="M19 5V1l3-1 2 2-1 5z" fill="#c4803c" />
    </g>
  )],
  ['Microsoft Word', 'w-12 bg-[#cfcfcf]', (
    <g>
      <path d="M1 6l5-5h11v17l-5 5H1z" fill="#2c5aa8" stroke="#a9c3ea" />
      <path d="M8 2l15 2v19L8 21z" fill="#f2f5fa" stroke="#8aa3c8" />
      <path d="M9.500 7l2 8 2-6 1.500 6 2-8" fill="none" stroke="#264f9c" strokeWidth="1.800" />
      <path d="M18 8h4M18 11h4M18 14h4M10 17.500l12 1" stroke="#4d72b4" />
    </g>
  )],
]

function Taskbar() {
  return (
    <footer className="flex h-10 shrink-0 items-stretch bg-[#1d1d1d] text-white">
      <button aria-label="Start" className="flex w-12 items-center justify-center">
        <svg width="16" height="16" viewBox="0 0 16 16" fill="#fff">
          <path d="M0 2.200L6.500 1.300V7.500H0zM7.500 1.200L16 0v7.500H7.500zM0 8.500h6.500v6.200L0 13.800zM7.500 8.500H16V16l-8.500-1.200z" />
        </svg>
      </button>
      <div className="relative flex w-72 items-center overflow-hidden border-b border-[#aaa] bg-[#f2f2f2]">
        <svg width="17" height="17" viewBox="0 0 17 17" fill="none" stroke="#222" strokeWidth="1.300" className="ml-3">
          <circle cx="10.500" cy="6.500" r="5.500" />
          <path d="M6.500 10.500L.5 16.500" />
        </svg>
        <input
          type="search"
          aria-label="Search"
          placeholder="Type here to search"
          className="ml-[11px] w-40 text-sm placeholder:text-[#3a3a3a]"
        />
        <svg width="80" height="38" viewBox="0 0 80 38" className="absolute right-0 bottom-0">
          <path d="M17 9q-1-4 4-4 3-5 7 0 6-1 5 4-1 4-9 4-6 0-7-4z" fill="#b5cdd6" />
          <path d="M22 26l12-5 12-5q8-2 12 0l8-4q10 0 14 7v12H20z" fill="#94746f" />
          <path d="M44 20q16 2 36-3v9H44z" fill="#80717d" />
          <path d="M15 30l2-13 2 9 2-10 2 9 3-8 1 9 4-6v10z" fill="#3b8742" />
          <path d="M1 38q2-9 14-9 24-12 45-4l20 8v5z" fill="#e9a0bd" />
          <path d="M5 38Q12 25 36 26q4 1 0 3-12 9-26 9z" fill="#b93bc4" />
          <path d="M35 36q8-12 30-11 4 1 1 3-8 7-27 9z" fill="#f2a22b" />
          <path d="M70 34q-2-10 10-12v16h-8z" fill="#dd55c0" />
        </svg>
      </div>
      {APPS.map(([name, bar, icon]) => (
        <button
          key={name}
          aria-label={name}
          className={`relative flex w-[49px] shrink-0 items-center justify-center ${name === 'Microsoft Word' ? 'bg-[#4b4b4b]' : ''}`}
        >
          <svg width="24" height="24" viewBox="0 0 24 24">{icon}</svg>
          {bar && <span className={`absolute bottom-0 h-0.5 ${bar}`} />}
        </button>
      ))}
      <div className="ml-auto flex items-center">
        <button className="flex items-center text-[13px] whitespace-nowrap">
          <svg width="24" height="26" viewBox="0 0 24 26">
            <circle cx="11" cy="12" r="10" fill="#f6a21f" />
            <circle cx="20" cy="4" r="3.500" fill="#c8321f" />
            <path d="M5 25q-5-1-4-5 1-4 5-3 3-5 8-2 3 0 4 3 5 0 5 4 0 3-4 3z" fill="#cfe0f5" />
          </svg>
          <span className="ml-2">15°C</span>
          <span className="ml-2.5">Partly sunny</span>
        </button>
        <div className="ml-6 flex items-center gap-2">
          <button aria-label="Show hidden icons">
            <svg width="12" height="12" fill="none" stroke="#fff" strokeWidth="1.300"><path d="M.5 9L6 3l5.500 6" /></svg>
          </button>
          <button aria-label="Battery" className="ml-0.5">
            <svg width="17" height="12" viewBox="0 0 17 12" fill="none" stroke="#fff">
              <path d="M6 2.500h9.500v7H4.500V8M1.500 0v2M4.500 0v2M.5 2.500h5v2q0 1.500-2.500 1.500T.5 4.500zM3 6v3.500h2" />
              <path d="M7 4.500h7v3H6.500z" fill="#fff" />
            </svg>
          </button>
          <button aria-label="Network" className="ml-0.5">
            <svg width="13" height="13" viewBox="0 0 13 13" fill="none" stroke="#ddd">
              <path d="M.5 12.500a12 12 0 0 1 12-12M4 12.500a9 9 0 0 1 8.500-8.500M7.500 12.500a5 5 0 0 1 5-5" />
              <circle cx="11.500" cy="11.500" r="1" fill="#fff" />
            </svg>
          </button>
          <button aria-label="Volume">
            <svg width="17" height="14" viewBox="0 0 17 14" fill="none" stroke="#fff">
              <path d="M.5 5v4h2.500l3.500 3.500v-11L3 5zM8.500 4.500q1.500 2.500 0 5M11 3q3 4 0 8M13.500 1.500q4 5.500 0 11" />
            </svg>
          </button>
          <button>ENG</button>
        </div>
        <button className="ml-3.5 w-[54px] leading-[18px] whitespace-nowrap">
          <time className="block">1:44 PM</time>
          <time className="block">3/26/2023</time>
        </button>
        <button aria-label="1 new notification" className="relative mr-2.5 ml-4">
          <svg width="26" height="28" viewBox="0 0 26 28">
            <path d="M0 5h16v13H8l-4 4v-4H0z" fill="#fff" />
            <path d="M3 8.500h10M3 11.500h10M3 14.500h6" stroke="#1d1d1d" />
            <circle cx="16" cy="20" r="7.500" fill="#2c2c2c" stroke="#8e8e8e" />
          </svg>
          <span className="absolute top-3 left-[13px] leading-4">1</span>
        </button>
        <span className="mr-1 h-10 w-px bg-[#6c6c6c]" />
      </div>
    </footer>
  )
}

export default function App() {
  const [tab, setTab] = useState('Home')
  return (
    <div className="flex min-h-screen flex-col bg-[#bfdbff] font-['Open_Sans','Noto_Sans',sans-serif] text-[11px]">
      <TitleBar />
      <Tabs tab={tab} onTab={setTab} />
      <div className="flex h-[90px] shrink-0 gap-[3px] border-y border-[#8db2e3] bg-[#dce9f8] px-1 pt-0.5 pb-0.5">
        <Clipboard />
        <FontGroup />
        <ParagraphGroup />
        <StylesGroup />
        <EditingGroup />
      </div>
      <Rulers />
      <Workspace />
      <StatusBar />
      <Taskbar />
    </div>
  )
}
